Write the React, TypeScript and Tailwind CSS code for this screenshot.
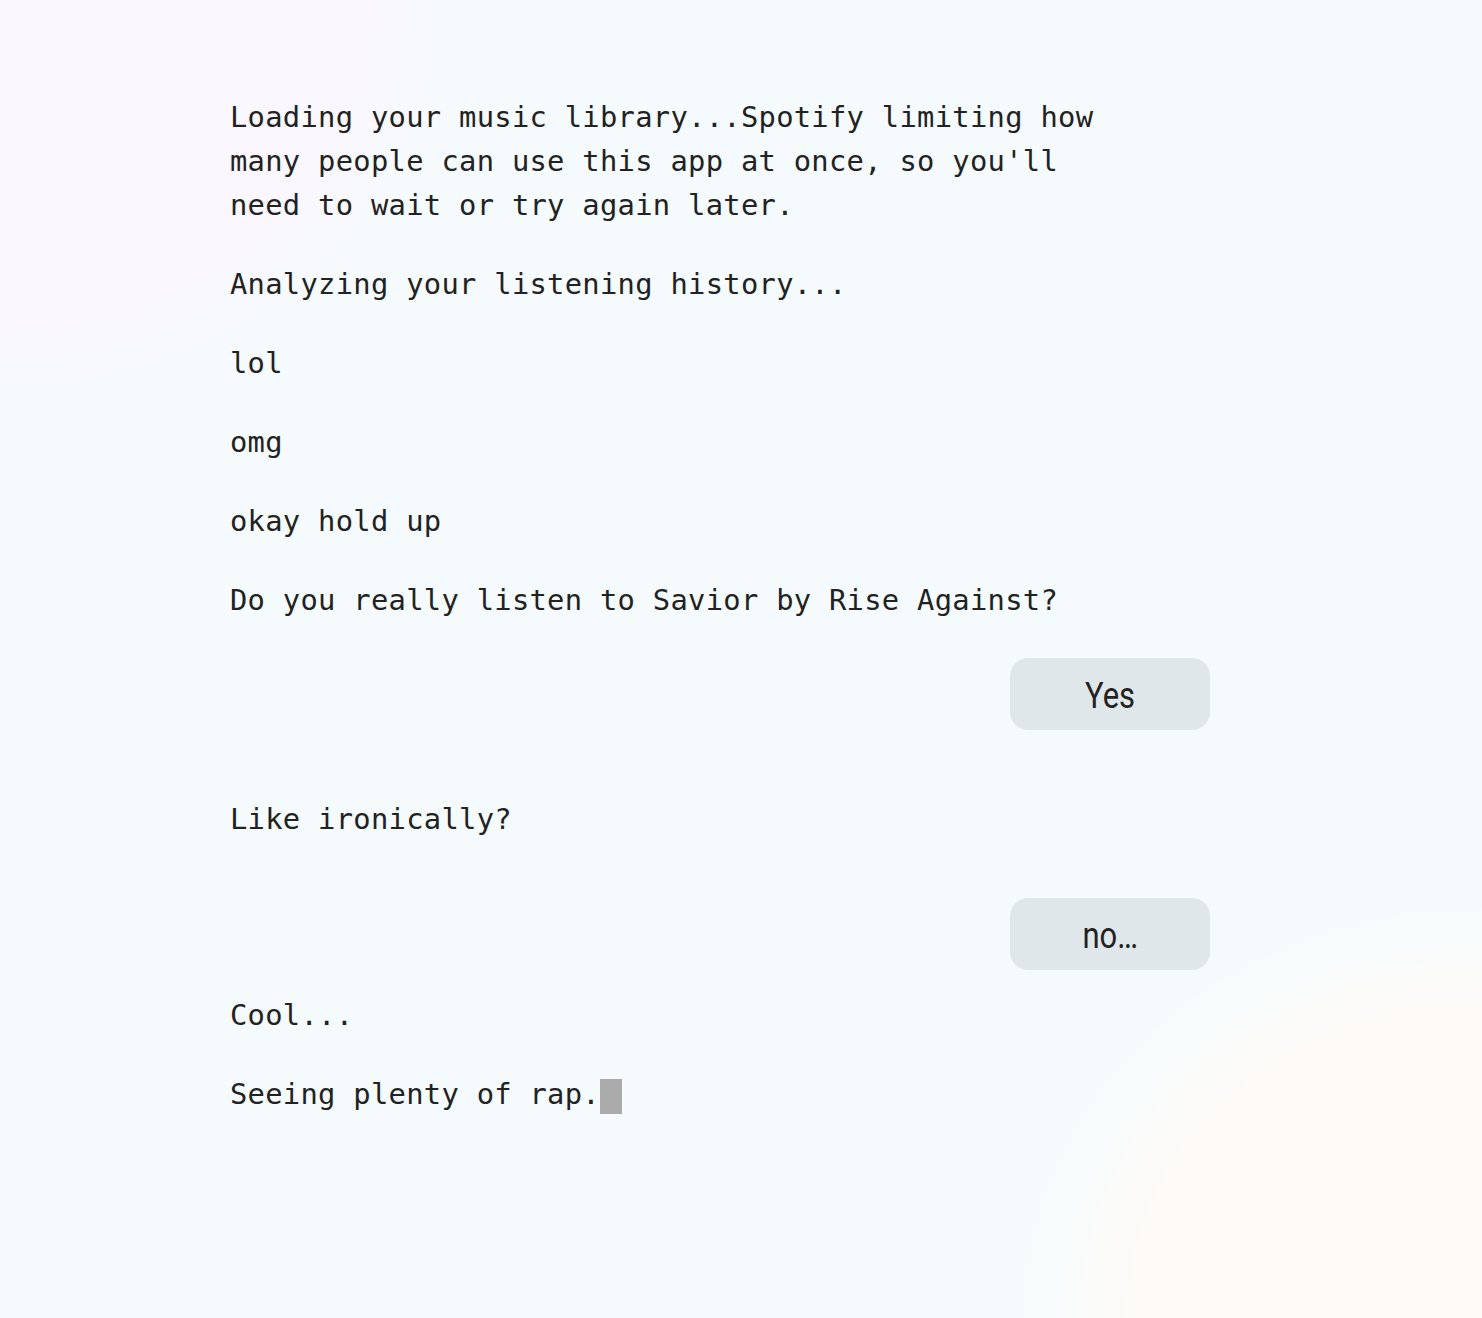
import React from "react";

const mono = "font-['DejaVu_Sans_Mono',monospace] text-[28.8px] tracking-[0.28px] leading-[44px] text-[#222]";

const Line = ({ children, className = "" }: { children: React.ReactNode; className?: string }) => (
  <p className={`${mono} ${className}`}>{children}</p>
);

const Reply = ({ label }: { label: string }) => (
  <div className="flex justify-end">
    <button className="w-[200px] h-[72px] rounded-[18px] bg-[#dfe7ea] flex items-center justify-center">
      <span className="font-['Roboto',sans-serif] text-[36px] text-[#222] scale-x-86 inline-block leading-none translate-y-[2px]">
        {label}
      </span>
    </button>
  </div>
);

export default function App() {
  return (
    <div className="min-h-screen bg-[#f5fbfd] bg-[radial-gradient(ellipse_at_0%_0%,#faf7fe_0px,#faf7fe_360px,transparent_480px),radial-gradient(ellipse_at_100%_100%,#fffaf6_0px,#fffaf6_320px,transparent_470px)]">
      <div className="ml-[230px] w-[980px] pt-[95px] pb-[200px] flex flex-col">
        <Line className="w-[890px]">
          Loading your music library...Spotify limiting how many people can use this app at once, so you'll need to wait or try again later.
        </Line>
        <Line className="mt-[35px]">Analyzing your listening history...</Line>
        <Line className="mt-[35px]">lol</Line>
        <Line className="mt-[35px]">omg</Line>
        <Line className="mt-[35px]">okay hold up</Line>
        <Line className="mt-[35px]">Do you really listen to Savior by Rise Against?</Line>
        <div className="mt-[36px]">
          <Reply label="Yes" />
        </div>
        <Line className="mt-[67px]">Like ironically?</Line>
        <div className="mt-[57px]">
          <Reply label="no…" />
        </div>
        <Line className="mt-[23px]">Cool...</Line>
        <Line className="mt-[35px]">
          Seeing plenty of rap.
          <span className="inline-block align-middle w-[22px] h-[35px] bg-[#aaaaaa]" />
        </Line>
      </div>
    </div>
  );
}
